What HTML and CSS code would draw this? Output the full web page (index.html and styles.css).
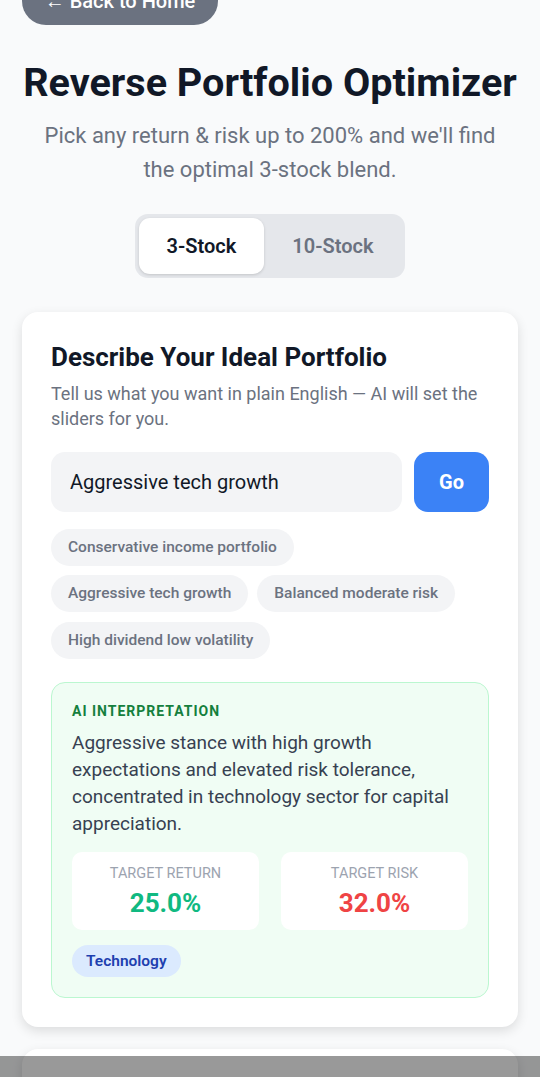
FILE: index.html
```html
<!DOCTYPE html>
<html lang="en">
<head>
    <meta charset="UTF-8">
    <meta name="viewport" content="width=device-width, initial-scale=1.0">
    <title>Reverse Portfolio Optimizer</title>
    <link rel="stylesheet" href="styles.css">
</head>
<body>
    <div class="page">
        <a class="back-button" href="#">← Back to Home</a>

        <header class="hero">
            <h1>Reverse Portfolio Optimizer</h1>
            <p>Pick any return &amp; risk up to 200% and we'll find the optimal 3-stock blend.</p>
        </header>

        <div class="mode-toggle">
            <button class="mode-button active">3-Stock</button>
            <button class="mode-button">10-Stock</button>
        </div>

        <section class="card">
            <h2>Describe Your Ideal Portfolio</h2>
            <p class="card-desc">Tell us what you want in plain English — AI will set the sliders for you.</p>

            <div class="prompt-row">
                <input class="prompt-input" type="text" value="Aggressive tech growth">
                <button class="go-button">Go</button>
            </div>

            <div class="suggestions">
                <span class="chip">Conservative income portfolio</span>
                <span class="chip">Aggressive tech growth</span>
                <span class="chip">Balanced moderate risk</span>
                <span class="chip">High dividend low volatility</span>
            </div>

            <div class="interpretation">
                <div class="interp-label">AI Interpretation</div>
                <p class="interp-text">Aggressive stance with high growth expectations and elevated risk tolerance, concentrated in technology sector for capital appreciation.</p>
                <div class="targets">
                    <div class="target">
                        <div class="target-label">Target Return</div>
                        <div class="target-value return">25.0%</div>
                    </div>
                    <div class="target">
                        <div class="target-label">Target Risk</div>
                        <div class="target-value risk">32.0%</div>
                    </div>
                </div>
                <div class="sector-tags">
                    <span class="sector-tag">Technology</span>
                </div>
            </div>
        </section>

        <section class="card next-card"></section>
    </div>
    <div class="bottom-shade"></div>
</body>
</html>
```

FILE: styles.css
```css
body {
    font-family: Roboto, "Noto Sans", Arial, sans-serif;
    margin: 0;
    background-color: #f9fafb;
    color: #111827;
    overflow: hidden;
}
.page {
    margin-top: -23px;
    padding: 0 22px;
}
.back-button {
    display: inline-block;
    box-sizing: border-box;
    width: 196px;
    height: 48px;
    line-height: 48px;
    text-align: center;
    background-color: #6b7280;
    color: white;
    font-size: 20px;
    font-weight: 500;
    border-radius: 24px;
    text-decoration: none;
    vertical-align: top;
}
.hero {
    text-align: center;
    margin-top: 34px;
}
.hero h1 {
    font-size: 39.6px;
    font-weight: 700;
    line-height: 48px;
    margin: 0 -12px;
    color: #111827;
}
.hero p {
    font-size: 22px;
    line-height: 34px;
    color: #6b7280;
    margin: 12px auto 0;
    max-width: 480px;
}
.mode-toggle {
    display: flex;
    width: fit-content;
    margin: 27px auto 0;
    padding: 4px;
    background-color: #e5e7eb;
    border-radius: 13px;
}
.mode-button {
    height: 56px;
    padding: 0 28px;
    border: none;
    border-radius: 11px;
    background: none;
    font-family: inherit;
    font-size: 20px;
    font-weight: 600;
    color: #6b7280;
}
.mode-button.active {
    background-color: white;
    color: #111827;
    box-shadow: 0 1px 3px rgba(0, 0, 0, 0.15);
}
.card {
    margin-top: 34px;
    padding: 29px;
    background-color: white;
    border-radius: 16px;
    box-shadow: 0 4px 12px rgba(0, 0, 0, 0.12);
}
.card h2 {
    font-size: 26px;
    font-weight: 700;
    line-height: 1.3;
    margin: 0;
}
.card-desc {
    font-size: 18px;
    line-height: 25px;
    color: #6b7280;
    margin: 6px 0 0;
}
.prompt-row {
    display: flex;
    gap: 12px;
    margin-top: 21px;
}
.prompt-input {
    flex: 1;
    min-width: 0;
    height: 60px;
    box-sizing: border-box;
    padding: 0 19px;
    border: none;
    border-radius: 14px;
    background-color: #f3f4f6;
    font-family: inherit;
    font-size: 20px;
    color: #111827;
}
.go-button {
    width: 75px;
    height: 60px;
    border: none;
    border-radius: 14px;
    background-color: #3b82f6;
    color: white;
    font-family: inherit;
    font-size: 20px;
    font-weight: 700;
}
.suggestions {
    display: flex;
    flex-wrap: wrap;
    gap: 9.5px 9px;
    margin-top: 17px;
}
.chip {
    padding: 0 17px;
    height: 37px;
    line-height: 37px;
    border-radius: 19px;
    background-color: #f3f4f6;
    color: #6b7280;
    font-size: 15.5px;
    font-weight: 500;
}
.interpretation {
    margin-top: 23px;
    padding: 20px;
    background-color: #f0fdf4;
    border: 1px solid #bbf7d0;
    border-radius: 14px;
}
.interp-label {
    font-size: 14px;
    font-weight: 700;
    letter-spacing: 1px;
    text-transform: uppercase;
    color: #15803d;
}
.interp-text {
    font-size: 19px;
    line-height: 27px;
    color: #374151;
    margin: 10px 0 0;
}
.targets {
    display: grid;
    grid-template-columns: 1fr 1fr;
    gap: 22px;
    margin-top: 15px;
}
.target {
    height: 78px;
    box-sizing: border-box;
    padding-top: 13px;
    background-color: white;
    border-radius: 10px;
    text-align: center;
}
.target-label {
    font-size: 14.5px;
    color: #9ca3af;
    text-transform: uppercase;
}
.target-value {
    font-size: 26px;
    font-weight: 700;
    margin-top: 6px;
}
.target-value.return {
    color: #10b981;
}
.target-value.risk {
    color: #ef4444;
}
.sector-tags {
    display: flex;
    flex-wrap: wrap;
    gap: 8px;
    margin-top: 15px;
}
.sector-tag {
    padding: 0 14px;
    height: 32px;
    line-height: 32px;
    border-radius: 16px;
    background-color: #dbeafe;
    color: #1e40af;
    font-size: 15.5px;
    font-weight: 600;
}
.next-card {
    margin-top: 22px;
    height: 200px;
    padding: 0;
}
.bottom-shade {
    position: fixed;
    left: 0;
    right: 0;
    bottom: 0;
    height: 21px;
    background-color: rgba(0, 0, 0, 0.4);
}
```
